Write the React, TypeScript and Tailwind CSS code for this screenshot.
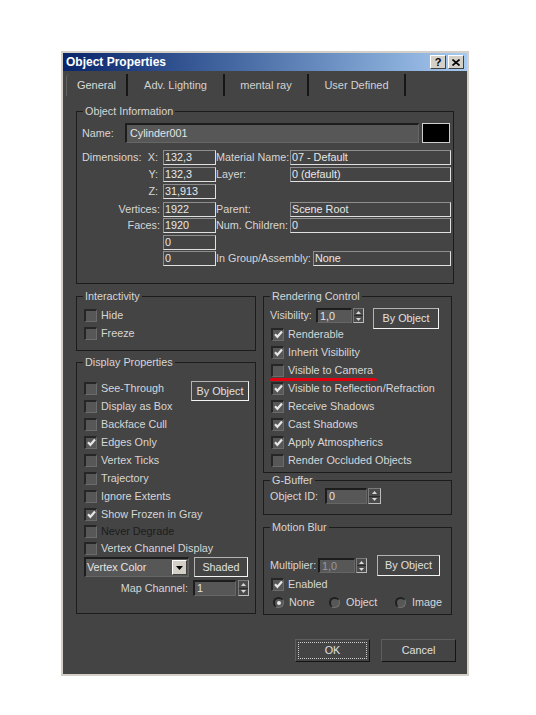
import React from "react";

type Kids = { children?: React.ReactNode };

function Check({ checked }: { checked?: boolean }) {
  return (
    <span className="w-[13px] h-[13px] shrink-0 bg-[#575757] border-t-2 border-l-2 border-r border-b border-t-[#262626] border-l-[#262626] border-r-[#6b6b6b] border-b-[#6b6b6b] flex items-center justify-center">
      {checked && (
        <svg width="9" height="9" viewBox="0 0 9 9">
          <path d="M1 4.2 L3.4 6.8 L8 1.6" fill="none" stroke="#e6e6e6" strokeWidth="2.2" />
        </svg>
      )}
    </span>
  );
}

function CheckRow({ label, checked, h, dark }: { label: string; checked?: boolean; h?: string; dark?: boolean }) {
  return (
    <div className={`flex items-center ${h ?? "h-[18px]"}`}>
      <Check checked={checked} />
      <span className={`ml-[4px] whitespace-nowrap ${dark ? "text-[#1c1c1c]" : ""}`}>{label}</span>
    </div>
  );
}

function Radio({ on }: { on?: boolean }) {
  return (
    <span className="w-[11px] h-[11px] shrink-0 rounded-full bg-[#575757] border-t-2 border-l-2 border-r border-b border-t-[#1f1f1f] border-l-[#1f1f1f] border-r-[#707070] border-b-[#707070] flex items-center justify-center">
      {on && <span className="w-[4px] h-[4px] rounded-full bg-[#e8e8e8]" />}
    </span>
  );
}

function Group({ title, className, children }: Kids & { title: string; className?: string }) {
  return (
    <fieldset className={`border border-[#1c1c1c] min-w-0 ${className ?? ""}`}>
      <legend className="ml-[6px] px-[2px] leading-[13px] whitespace-nowrap">{title}</legend>
      {children}
    </fieldset>
  );
}

// read-only field with the light etched border
function Field({ w, children }: Kids & { w: string }) {
  return (
    <div className={`${w} h-[15px] shrink-0 border border-t-[#8e8e8e] border-l-[#8e8e8e] border-r-[#e0e0e0] border-b-[#e0e0e0] text-[#e8e8e8] leading-[13px] pl-[1px] whitespace-nowrap overflow-hidden`}>
      {children}
    </div>
  );
}

// editable, sunken input
function Input({ w, h, dim, children }: Kids & { w: string; h?: string; dim?: boolean }) {
  return (
    <div className={`${w} ${h ?? "h-[15px]"} shrink-0 bg-[#575757] border-t-2 border-l-2 border-r border-b border-t-[#1d1d1d] border-l-[#1d1d1d] border-r-[#666666] border-b-[#666666] flex items-center pl-[2px] whitespace-nowrap overflow-hidden ${dim ? "text-[#9a9a9a]" : "text-[#e4e4e4]"}`}>
      {children}
    </div>
  );
}

function Spinner({ w, h }: { w: string; h?: string }) {
  return (
    <div className={`${w} ${h ?? "h-[15px]"} shrink-0 flex flex-col border border-t-[#7a7a7a] border-l-[#7a7a7a] border-r-[#bdbdbd] border-b-[#bdbdbd] bg-[#4b4b4b]`}>
      <div className="flex-1 flex items-center justify-center border-b border-[#2a2a2a]">
        <svg width="5" height="3" viewBox="0 0 5 3"><path d="M2.5 0 L5 3 L0 3 Z" fill="#d8d8d8" /></svg>
      </div>
      <div className="flex-1 flex items-center justify-center">
        <svg width="5" height="3" viewBox="0 0 5 3"><path d="M0 0 L5 0 L2.5 3 Z" fill="#d8d8d8" /></svg>
      </div>
    </div>
  );
}

function LightBtn({ className, children }: Kids & { className: string }) {
  return (
    <div className={`${className} shrink-0 flex items-center justify-center border border-t-[#b3b3b3] border-l-[#b3b3b3] border-r-[#f4f4f4] border-b-[#f4f4f4] text-[#e0e0e0] whitespace-nowrap`}>
      {children}
    </div>
  );
}

function DarkBtn({ focus, children }: Kids & { focus?: boolean }) {
  return (
    <div className="w-[75px] h-[23px] flex border border-t-[#5e5e5e] border-l-[#5e5e5e] border-r-[#141414] border-b-[#141414] p-[2px]">
      <div className={`flex-1 flex items-center justify-center text-[#e0e0e0] ${focus ? "border border-dotted border-[#cfcfcf]" : ""}`}>
        {children}
      </div>
    </div>
  );
}

const tabs = [
  { name: "General", w: "w-[62px]" },
  { name: "Adv. Lighting", w: "w-[97px]" },
  { name: "mental ray", w: "w-[84px]" },
  { name: "User Defined", w: "w-[97px]" },
];

export default function App() {
  return (
    <div className="min-h-[715px] bg-white pt-[51px] pl-[61px] font-['Liberation_Sans',Arial,sans-serif] text-[10.8px] text-[#d6d6d6]">
      <div className="w-[408px] h-[625px] border-2 border-[#d4d0c8] bg-[#444444] flex flex-col">
        {/* title bar */}
        <div className="h-[18px] shrink-0 flex items-center justify-between bg-linear-to-r from-[#0a246a] to-[#a6caf0] pl-[3px] pr-[3px]">
          <span className="text-white font-bold text-[12px] leading-none">Object Properties</span>
          <div className="flex gap-[2px]">
            <div className="w-[16px] h-[14px] bg-[#d4d0c8] border border-t-white border-l-white border-r-[#404040] border-b-[#404040] flex items-center justify-center text-black font-bold text-[11px] leading-none">?</div>
            <div className="w-[16px] h-[14px] bg-[#d4d0c8] border border-t-white border-l-white border-r-[#404040] border-b-[#404040] flex items-center justify-center">
              <svg width="8" height="7" viewBox="0 0 8 7">
                <path d="M0.5 0.5 L7.5 6.5 M7.5 0.5 L0.5 6.5" stroke="#000" strokeWidth="1.6" />
              </svg>
            </div>
          </div>
        </div>

        {/* tabs */}
        <div className="h-[26px] shrink-0 flex pt-[3px] pl-[3px] text-[11px]">
          {tabs.map((t, i) => (
            <div
              key={t.name}
              className={`${t.w} h-[22px] flex items-center justify-center border-r-2 border-r-[#161616] ${i === 0 ? "border-l border-l-[#626262] rounded-tl-[4px] text-[#dcdcdc]" : "text-[#d2d2d2]"}`}
            >
              {t.name}
            </div>
          ))}
        </div>

        {/* panel */}
        <div className="flex flex-col px-[13px] pt-[8px]">
          <Group title="Object Information">
            <div className="pl-[5px] pr-[1px] pb-[17px]">
              <div className="flex items-center mt-[5px] h-[20px]">
                <span className="w-[43px]">Name:</span>
                <Input w="w-[294px]" h="h-[20px]">
                  <span className="pl-[1px]">Cylinder001</span>
                </Input>
                <div className="ml-[3px] w-[28px] h-[20px] bg-black border border-[#cfcfcf]" />
              </div>

              <div className="flex items-center h-[16px] mt-[6px]">
                <div className="w-[81px] pr-[5px] flex justify-between">
                  <span>Dimensions:</span>
                  <span>X:</span>
                </div>
                <Field w="w-[53px]">132,3</Field>
                <span className="w-[74px] shrink-0 whitespace-nowrap">Material Name:</span>
                <Field w="w-[161px]">07 - Default</Field>
              </div>
              <div className="flex items-center h-[16px] mt-[1px]">
                <span className="w-[81px] pr-[5px] text-right">Y:</span>
                <Field w="w-[53px]">132,3</Field>
                <span className="w-[74px] shrink-0">Layer:</span>
                <Field w="w-[161px]">0 (default)</Field>
              </div>
              <div className="flex items-center h-[16px] mt-[1px]">
                <span className="w-[81px] pr-[5px] text-right">Z:</span>
                <Field w="w-[53px]">31,913</Field>
              </div>
              <div className="flex items-center h-[16px] mt-[2px]">
                <span className="w-[81px] pr-[3px] text-right">Vertices:</span>
                <Field w="w-[53px]">1922</Field>
                <span className="w-[74px] shrink-0">Parent:</span>
                <Field w="w-[161px]">Scene Root</Field>
              </div>
              <div className="flex items-center h-[16px]">
                <span className="w-[81px] pr-[3px] text-right">Faces:</span>
                <Field w="w-[53px]">1920</Field>
                <span className="w-[74px] shrink-0 whitespace-nowrap">Num. Children:</span>
                <Field w="w-[161px]">0</Field>
              </div>
              <div className="flex items-center h-[16px] mt-[1px]">
                <span className="w-[81px]" />
                <Field w="w-[53px]">0</Field>
              </div>
              <div className="flex items-center h-[16px]">
                <span className="w-[81px]" />
                <Field w="w-[53px]">0</Field>
                <span className="w-[97px] shrink-0 whitespace-nowrap">In Group/Assembly:</span>
                <Field w="w-[138px]">None</Field>
              </div>
            </div>
          </Group>

          <div className="flex items-start gap-[7px] mt-[6px]">
            {/* left column */}
            <div className="w-[180px] flex flex-col">
              <Group title="Interactivity">
                <div className="pl-[7px] mt-[3px] pb-[8px]">
                  <CheckRow label="Hide" />
                  <CheckRow label="Freeze" />
                </div>
              </Group>

              <Group title="Display Properties" className="mt-[5px]">
                <div className="pl-[7px] pr-[6px] mt-[10px] pb-[17px]">
                  <div className="flex items-start justify-between h-[18px]">
                    <div className="flex items-center h-[18px]">
                      <Check />
                      <span className="ml-[4px]">See-Through</span>
                    </div>
                    <LightBtn className="w-[58px] h-[20px] mt-[2px]">By Object</LightBtn>
                  </div>
                  <CheckRow label="Display as Box" />
                  <CheckRow label="Backface Cull" />
                  <CheckRow label="Edges Only" checked />
                  <CheckRow label="Vertex Ticks" />
                  <CheckRow label="Trajectory" />
                  <CheckRow label="Ignore Extents" />
                  <CheckRow label="Show Frozen in Gray" checked />
                  <CheckRow label="Never Degrade" h="h-[17px]" dark />
                  <CheckRow label="Vertex Channel Display" h="h-[16px]" />

                  <div className="flex items-start mt-[1px]">
                    <div className="w-[105px] h-[20px] bg-[#575757] border-t-2 border-l-2 border-r border-b border-t-[#1d1d1d] border-l-[#1d1d1d] border-r-[#666666] border-b-[#666666] flex items-center justify-between pl-[1px] pr-[1px] text-[#e4e4e4]">
                      <span>Vertex Color</span>
                      <span className="w-[15px] h-[15px] bg-[#d4d0c8] border border-t-white border-l-white border-r-[#404040] border-b-[#404040] flex items-center justify-center">
                        <svg width="7" height="4" viewBox="0 0 7 4"><path d="M0 0 L7 0 L3.5 4 Z" fill="#000" /></svg>
                      </span>
                    </div>
                    <LightBtn className="ml-[5px] w-[54px] h-[20px]">Shaded</LightBtn>
                  </div>

                  <div className="flex items-center mt-[3px] h-[16px]">
                    <span className="w-[110px] pr-[5px] text-right whitespace-nowrap">Map Channel:</span>
                    <Input w="w-[43px]" h="h-[16px]">1</Input>
                    <div className="ml-[2px]">
                      <Spinner w="w-[11px]" h="h-[16px]" />
                    </div>
                  </div>
                </div>
              </Group>
            </div>

            {/* right column */}
            <div className="w-[189px] flex flex-col">
              <Group title="Rendering Control">
                <div className="pl-[7px] mt-[5px] pb-[3px]">
                  <div className="flex items-start h-[17px]">
                    <span className="w-[46px] -ml-[1px] leading-[15px]">Visibility:</span>
                    <Input w="w-[36px]">1,0</Input>
                    <div className="ml-[1px]">
                      <Spinner w="w-[11px]" />
                    </div>
                    <LightBtn className="ml-[9px] w-[66px] h-[21px]">By Object</LightBtn>
                  </div>
                  <CheckRow label="Renderable" checked />
                  <CheckRow label="Inherit Visibility" checked />
                  <div className="relative">
                    <CheckRow label="Visible to Camera" />
                    <div className="absolute left-[-1px] top-[17px] w-[107px] h-[3px] rounded-full bg-[#e3000f]" />
                  </div>
                  <CheckRow label="Visible to Reflection/Refraction" checked />
                  <CheckRow label="Receive Shadows" checked />
                  <CheckRow label="Cast Shadows" checked />
                  <CheckRow label="Apply Atmospherics" checked />
                  <CheckRow label="Render Occluded Objects" />
                </div>
              </Group>

              <Group title="G-Buffer" className="mt-[1px]">
                <div className="pl-[7px] mt-[1px] pb-[10px]">
                  <div className="flex items-center h-[16px]">
                    <span className="w-[55px] -ml-[1px]">Object ID:</span>
                    <Input w="w-[42px]" h="h-[16px]">0</Input>
                    <div className="ml-[1px]">
                      <Spinner w="w-[13px]" h="h-[16px]" />
                    </div>
                  </div>
                </div>
              </Group>

              <Group title="Motion Blur" className="mt-[6px]">
                <div className="pl-[7px] mt-[21px] pb-[2px]">
                  <div className="flex items-center h-[21px]">
                    <span className="w-[48px] -ml-[1px]">Multiplier:</span>
                    <Input w="w-[37px]" dim>1,0</Input>
                    <div className="ml-[1px]">
                      <Spinner w="w-[11px]" />
                    </div>
                    <LightBtn className="ml-[10px] w-[63px] h-[21px]">By Object</LightBtn>
                  </div>
                  <CheckRow label="Enabled" checked h="h-[16px]" />
                  <div className="flex items-center h-[20px]">
                    <div className="w-[58px] pl-[2px] flex items-center">
                      <Radio on />
                      <span className="ml-[5px]">None</span>
                    </div>
                    <div className="w-[66px] flex items-center">
                      <Radio />
                      <span className="ml-[6px]">Object</span>
                    </div>
                    <div className="flex items-center">
                      <Radio />
                      <span className="ml-[6px]">Image</span>
                    </div>
                  </div>
                </div>
              </Group>
            </div>
          </div>

          <div className="flex justify-end gap-[11px] mt-[24px] -mr-[2px]">
            <DarkBtn focus>OK</DarkBtn>
            <DarkBtn>Cancel</DarkBtn>
          </div>
        </div>
      </div>
    </div>
  );
}
